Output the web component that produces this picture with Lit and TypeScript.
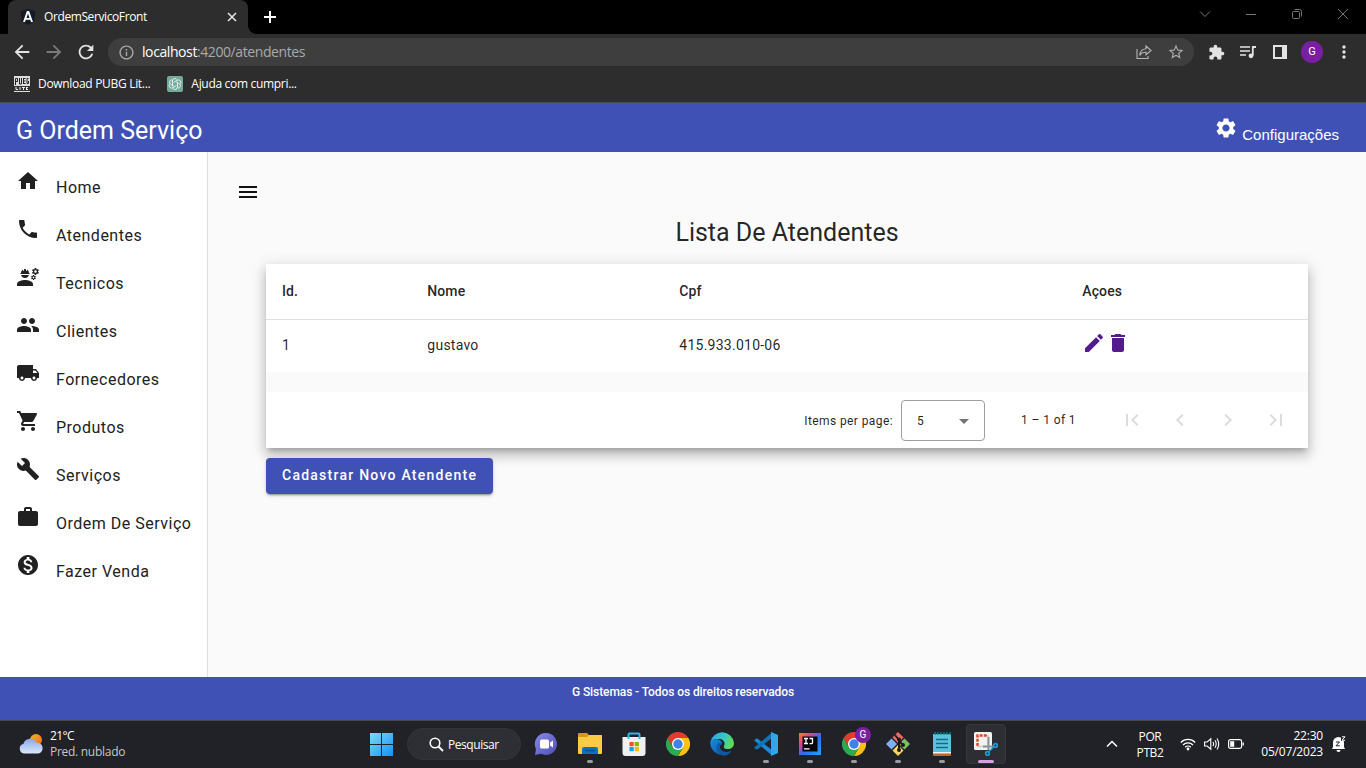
import { LitElement, html, css, svg, TemplateResult } from "lit";
import { customElement } from "lit/decorators.js";

const ICONS: Record<string, string> = {
  home: "M10 20v-6h4v6h5v-8h3L12 3 2 12h3v8z",
  phone: "M6.62 10.79c1.44 2.83 3.76 5.14 6.59 6.59l2.2-2.2c.27-.27.67-.36 1.02-.24 1.12.37 2.33.57 3.57.57.55 0 1 .45 1 1V20c0 .55-.45 1-1 1-9.39 0-17-7.61-17-17 0-.55.45-1 1-1h3.5c.55 0 1 .45 1 1 0 1.25.2 2.45.57 3.57.11.35.03.74-.25 1.02l-2.2 2.2z",
  engineering: "M9 15c-2.67 0-8 1.34-8 4v2h16v-2c0-2.66-5.33-4-8-4zM5.1 10c.45 1.7 2 3 3.9 3s3.45-1.3 3.9-3zM4.74 9h8.52c.27 0 .49-.22.49-.49v-.02c0-.27-.22-.49-.49-.49H13c0-1.48-.81-2.75-2-3.45v.95c0 .28-.22.5-.5.5s-.5-.22-.5-.5V4.14C9.68 4.06 9.35 4 9 4s-.68.06-1 .14V5.5c0 .28-.22.5-.5.5S7 5.78 7 5.5v-.95C5.81 5.25 5 6.52 5 8h-.26c-.27 0-.49.22-.49.49v.03c0 .26.22.48.49.48zM21.98 6.23l.93-.83-.75-1.3-1.19.39c-.14-.11-.3-.2-.47-.27L20.25 3h-1.5l-.25 1.22c-.17.07-.33.16-.48.27l-1.18-.39-.75 1.3.93.83c-.02.17-.02.35 0 .52l-.93.85.75 1.3 1.2-.38c.13.1.28.18.43.25l.28 1.23h1.5l.27-1.22c.16-.07.3-.15.44-.25l1.19.38.75-1.3-.93-.85c.03-.19.02-.36.01-.53zM19.5 7.75c-.69 0-1.25-.56-1.25-1.25s.56-1.25 1.25-1.25 1.25.56 1.25 1.25-.56 1.25-1.25 1.25zM19.4 10.79l-.85.28c-.1-.08-.21-.14-.33-.19l-.18-.88h-1.07l-.18.87c-.12.05-.24.12-.34.19l-.84-.28-.54.93.66.59c-.01.13-.01.25 0 .37l-.66.61.54.93.86-.27c.1.07.2.13.31.18l.18.88h1.07l.19-.87c.11-.05.22-.11.32-.18l.85.27.54-.93-.66-.61c.01-.13.01-.25 0-.37l.66-.59-.53-.93zm-1.9 2.6c-.49 0-.89-.4-.89-.89s.4-.89.89-.89.89.4.89.89-.4.89-.89.89z",
  group: "M16 11c1.66 0 2.99-1.34 2.99-3S17.66 5 16 5c-1.66 0-3 1.34-3 3s1.34 3 3 3zm-8 0c1.66 0 2.99-1.34 2.99-3S9.66 5 8 5C6.34 5 5 6.34 5 8s1.34 3 3 3zm0 2c-2.33 0-7 1.17-7 3.5V19h14v-2.5c0-2.33-4.67-3.5-7-3.5zm8 0c-.29 0-.62.02-.97.05 1.16.84 1.97 1.97 1.97 3.45V19h6v-2.5c0-2.33-4.67-3.5-7-3.5z",
  truck: "M20 8h-3V4H3c-1.1 0-2 .9-2 2v11h2c0 1.66 1.34 3 3 3s3-1.34 3-3h6c0 1.66 1.34 3 3 3s3-1.34 3-3h2v-5l-3-4zM6 18.5c-.83 0-1.5-.67-1.5-1.5s.67-1.5 1.5-1.5 1.5.67 1.5 1.5-.67 1.5-1.5 1.5zm13.5-9l1.96 2.5H17V9.5h2.5zm-1.5 9c-.83 0-1.5-.67-1.5-1.5s.67-1.5 1.5-1.5 1.5.67 1.5 1.5-.67 1.5-1.5 1.5z",
  cart: "M7 18c-1.1 0-1.99.9-1.99 2S5.9 22 7 22s2-.9 2-2-.9-2-2-2zM1 2v2h2l3.6 7.59-1.35 2.45c-.16.28-.25.61-.25.96 0 1.1.9 2 2 2h12v-2H7.42c-.14 0-.25-.11-.25-.25l.03-.12.9-1.63h7.45c.75 0 1.41-.41 1.75-1.03l3.58-6.49c.08-.14.12-.31.12-.48 0-.55-.45-1-1-1H5.21l-.94-2H1zm16 16c-1.1 0-1.99.9-1.99 2s.89 2 1.99 2 2-.9 2-2-.9-2-2-2z",
  build: "M22.7 19l-9.1-9.1c.9-2.3.4-5-1.5-6.9-2-2-5-2.4-7.4-1.3L9 6 6 9 1.6 4.7C.4 7.1.9 10.1 2.9 12.1c1.9 1.9 4.6 2.4 6.9 1.5l9.1 9.1c.4.4 1 .4 1.4 0l2.3-2.3c.5-.4.5-1.1.1-1.4z",
  work: "M20 6h-4V4c0-1.11-.89-2-2-2h-4c-1.11 0-2 .89-2 2v2H4c-1.11 0-1.99.89-1.99 2L2 19c0 1.11.89 2 2 2h16c1.11 0 2-.89 2-2V8c0-1.11-.89-2-2-2zm-6 0h-4V4h4v2z",
  money: "M12 2C6.48 2 2 6.48 2 12s4.48 10 10 10 10-4.48 10-10S17.52 2 12 2zm1.41 16.09V20h-2.67v-1.93c-1.71-.36-3.16-1.46-3.27-3.4h1.96c.1 1.05.82 1.87 2.65 1.87 1.96 0 2.4-.98 2.4-1.59 0-.83-.44-1.61-2.67-2.14-2.48-.6-4.18-1.62-4.18-3.67 0-1.72 1.39-2.84 3.11-3.21V4h2.67v1.95c1.86.45 2.79 1.86 2.85 3.39H14.3c-.05-1.11-.64-1.87-2.22-1.87-1.5 0-2.4.68-2.4 1.64 0 .84.65 1.39 2.67 1.91s4.18 1.39 4.18 3.91c-.01 1.83-1.38 2.83-3.12 3.16z",
  settings: "M19.14 12.94c.04-.3.06-.61.06-.94 0-.32-.02-.64-.07-.94l2.03-1.58c.18-.14.23-.41.12-.61l-1.92-3.32c-.12-.22-.37-.29-.59-.22l-2.39.96c-.5-.38-1.03-.7-1.62-.94l-.36-2.54c-.04-.24-.24-.41-.48-.41h-3.84c-.24 0-.43.17-.47.41l-.36 2.54c-.59.24-1.13.57-1.62.94l-2.39-.96c-.22-.08-.47 0-.59.22L2.74 8.87c-.12.21-.08.47.12.61l2.03 1.58c-.05.3-.09.63-.09.94s.02.64.07.94l-2.03 1.58c-.18.14-.23.41-.12.61l1.92 3.32c.12.22.37.29.59.22l2.39-.96c.5.38 1.03.7 1.62.94l.36 2.54c.05.24.24.41.48.41h3.84c.24 0 .44-.17.47-.41l.36-2.54c.59-.24 1.13-.56 1.62-.94l2.39.96c.22.08.47 0 .59-.22l1.92-3.32c.12-.22.07-.47-.12-.61l-2.01-1.58zM12 15.6c-1.98 0-3.6-1.62-3.6-3.6s1.62-3.6 3.6-3.6 3.6 1.62 3.6 3.6-1.62 3.6-3.6 3.6z",
  edit: "M3 17.25V21h3.75L17.81 9.94l-3.75-3.75L3 17.25zM20.71 7.04c.39-.39.39-1.02 0-1.41l-2.34-2.34c-.39-.39-1.02-.39-1.41 0l-1.83 1.83 3.75 3.75 1.83-1.83z",
  trash: "M6 19c0 1.1.9 2 2 2h8c1.1 0 2-.9 2-2V7H6v12zM19 4h-3.5l-1-1h-5l-1 1H5v2h14V4z",
  menu: "M3 18h18v-2H3v2zm0-5h18v-2H3v2zm0-7v2h18V6H3z",
  first: "M18.41 16.59L13.82 12l4.59-4.59L17 6l-6 6 6 6zM6 6h2v12H6z",
  prev: "M15.41 7.41L14 6l-6 6 6 6 1.41-1.41L10.83 12z",
  next: "M10 6L8.59 7.41 13.17 12l-4.58 4.59L10 18l6-6z",
  last: "M5.59 7.41L10.18 12l-4.59 4.59L7 18l6-6-6-6zM16 6h2v12h-2z",
  back: "M20 11H7.83l5.59-5.59L12 4l-8 8 8 8 1.41-1.41L7.83 13H20v-2z",
  forward: "M12 4l-1.41 1.41L16.17 11H4v2h12.17l-5.58 5.59L12 20l8-8z",
  reload: "M17.65 6.35C16.2 4.9 14.21 4 12 4c-4.42 0-7.99 3.58-7.99 8s3.57 8 7.99 8c3.73 0 6.84-2.55 7.73-6h-2.08c-.82 2.33-3.04 4-5.65 4-3.31 0-6-2.69-6-6s2.69-6 6-6c1.66 0 3.14.69 4.22 1.78L13 11h7V4l-2.35 2.35z",
  info: "M11 7h2v2h-2zm0 4h2v6h-2zm1-9C6.48 2 2 6.48 2 12s4.48 10 10 10 10-4.48 10-10S17.52 2 12 2zm0 18c-4.41 0-8-3.59-8-8s3.59-8 8-8 8 3.59 8 8-3.59 8-8 8z",
  star: "M22 9.24l-7.19-.62L12 2 9.19 8.63 2 9.24l5.46 4.73L5.82 21 12 17.27 18.18 21l-1.63-7.03L22 9.24zM12 15.4l-3.76 2.27 1-4.28-3.32-2.88 4.38-.38L12 6.1l1.71 4.04 4.38.38-3.32 2.88 1 4.28L12 15.4z",
  puzzle: "M20.5 11H19V7c0-1.1-.9-2-2-2h-4V3.500C13 2.120 11.880 1 10.500 1S8 2.120 8 3.500V5H4c-1.100 0-1.990.9-1.990 2v3.800H3.500c1.490 0 2.700 1.210 2.700 2.700s-1.210 2.700-2.700 2.700H2V20c0 1.100.9 2 2 2h3.800v-1.500c0-1.490 1.210-2.700 2.700-2.700 1.490 0 2.700 1.210 2.700 2.700V22H17c1.100 0 2-.9 2-2v-4h1.500c1.380 0 2.500-1.120 2.500-2.500S21.880 11 20.500 11z",
  more: "M12 8c1.1 0 2-.9 2-2s-.9-2-2-2-2 .9-2 2 .9 2 2 2zm0 2c-1.100 0-2 .9-2 2s.9 2 2 2 2-.9 2-2-.9-2-2-2zm0 6c-1.100 0-2 .9-2 2s.9 2 2 2 2-.9 2-2-.9-2-2-2z",
};

const icon = (name: string, size = 24) => html`<svg class="ic" width=${size} height=${size} viewBox="0 0 24 24" fill="currentColor"><path d=${ICONS[name]}></path></svg>`;

const art = (w: number, h: number, body: TemplateResult | unknown) =>
  html`<svg class="ic" width=${w} height=${h} viewBox="0 0 ${w} ${h}" fill="none">${body}</svg>`;

const chromeLogo = svg`
  <path d="M12 6H22.400A12 12 0 0 0 1.600 6L6.800 15Z" fill="#e33b2e"/>
  <path d="M12 6H22.400A12 12 0 0 1 12 24L17.200 15Z" fill="#fbc116"/>
  <path d="M6.800 15L1.600 6A12 12 0 0 0 12 24L17.200 15Z" fill="#2da94f"/>
  <circle cx="12" cy="12" r="6" fill="#fff"/><circle cx="12" cy="12" r="4.700" fill="#3f82ee"/>`;

@customElement("browser-chrome")
export class BrowserChrome extends LitElement {
  static styles = css`
    :host { display: block; background: #2d2d2d; color: #fff; font-family: "Open Sans", "Noto Sans", sans-serif; border-bottom: 1px solid #4b4b4b; height: 102px; box-sizing: content-box; }
    .ic { display: block; flex: none; }
    .tabs { height: 34px; background: #000; display: flex; align-items: stretch; }
    .tab { width: 240px; box-sizing: border-box; margin-left: 8px; background: #2d2d2d; border-radius: 8px 8px 0 0; display: flex; align-items: center; padding: 0 10px 0 12px; font-size: 12px; }
    .tab-title { flex: 1; margin-left: 8px; letter-spacing: -0.400px; padding-bottom: 1px; }
    .foot-r { width: 8px; height: 8px; align-self: flex-end; background: radial-gradient(circle at 8px 0, #000 7.500px, #2d2d2d 8px); }
    .plus { align-self: center; margin-left: 8px; }
    .win { margin-left: auto; display: flex; align-items: center; padding: 0 0 6px; color: #777; }
    .win span { width: 46px; display: flex; justify-content: center; }
    .bar { height: 36px; display: flex; align-items: center; padding: 0 6px; color: #e3e3e3; }
    .slot { width: 32px; display: flex; justify-content: center; flex: none; }
    .dim { color: #7b7b7b; }
    .omni { height: 28px; margin: 0 6px 0 6px; flex: 1; background: #3e3e3e; border-radius: 14px; display: flex; align-items: center; padding: 0 2px 0 9.500px; font-size: 14px; color: #a9a9a9; }
    .url { flex: 1; margin-left: 7.500px; letter-spacing: -0.410px; padding-bottom: 1px; }
    .url b { font-weight: 400; color: #fff; }
    .avatar { width: 22px; height: 22px; border-radius: 50%; background: #7b1fa2; color: #fff; font: 11px/22px Roboto, sans-serif; text-align: center; }
    .marks { height: 28px; display: flex; align-items: center; padding-left: 14px; font-size: 12px; }
    .marks span { margin: 0 17px 2px 8px; letter-spacing: -0.310px; }
  `;
  render() {
    return html`
      <div class="tabs">
        <div class="tab">
          ${art(16, 16, svg`<path d="M8 0l7.500 2.600-1.200 10L8 16 1.700 12.600.5 2.600z" fill="#141b28"/><path d="M6.900 2L3 13h2l.8-2.300h4.400l.8 2.300h2L9.100 2zM8 4.500l1.500 4.500h-3z" fill="#fff" fill-rule="evenodd"/>`)}
          <span class="tab-title">OrdemServicoFront</span>
          ${art(12, 12, svg`<path d="M2 2l8 8M10 2l-8 8" stroke="#e8e8e8" stroke-width="1.500"/>`)}
        </div>
        <div class="foot-r"></div>
        <div class="plus">${art(12, 12, svg`<path d="M6 0v12M0 6h12" stroke="#fff" stroke-width="2"/>`)}</div>
        <div class="win">
          <span>${art(12, 12, svg`<path d="M1 3.500l5 5 5-5" stroke="currentColor"/>`)}</span>
          <span>${art(10, 12, svg`<path d="M0 6.500h10" stroke="currentColor"/>`)}</span>
          <span>${art(12, 12, svg`<rect x="1.500" y="3.500" width="7" height="7" rx="1" stroke="currentColor"/><path d="M3.500 1.500h5a2 2 0 0 1 2 2v5" stroke="currentColor"/>`)}</span>
          <span>${art(12, 12, svg`<path d="M1 1l10 10M11 1L1 11" stroke="currentColor"/>`)}</span>
        </div>
      </div>
      <div class="bar">
        <span class="slot">${icon("back", 22)}</span>
        <span class="slot dim">${icon("forward", 22)}</span>
        <span class="slot">${icon("reload", 22)}</span>
        <div class="omni">
          ${icon("info", 17)}
          <span class="url"><b>localhost</b>:4200/atendentes</span>
          <span class="slot">${art(16, 16, svg`<path d="M1 5v9.500h11V12M10 2l5 4.500-5 4.200V8.200C7 8 5 9 3.800 11.500 4 7.500 6.500 5 10 4.700z" stroke="#b5b5b5" stroke-width="1.100"/>`)}</span>
          <span class="slot">${icon("star", 18)}</span>
        </div>
        <span class="slot">${icon("puzzle", 17)}</span>
        <span class="slot">${art(16, 14, svg`<path d="M0 2h10M0 6h10M0 10h6" stroke="currentColor" stroke-width="1.700"/><path d="M12.800 1v9.500M12 2h4" stroke="currentColor" stroke-width="1.800"/><circle cx="11" cy="10.800" r="2.400" fill="currentColor"/>`)}</span>
        <span class="slot">${art(14, 14, svg`<path fill-rule="evenodd" d="M0 0h14v14H0zM2 2v10h7V2z" fill="currentColor"/>`)}</span>
        <span class="slot"><span class="avatar">G</span></span>
        <span class="slot">${icon("more", 20)}</span>
      </div>
      <div class="marks">
        ${art(16, 16, svg`<rect width="16" height="16" fill="#ddd"/><path d="M1.500 9V2.500h2v3h-2M5.500 2v6h2V2M9.500 2v6M9.500 2.500h2M9.500 5h2M9.500 7.500h2M14.500 2.500h-1.500v5h1.500V5" stroke="#222" stroke-width="1"/><rect y="10" width="16" height="5" fill="#333"/><path d="M2 11v2.500h2M6 11v3M8 11.500h3M9.500 11.500v2.500M12 11.500h2M12 13.500h2M12.500 11v3" stroke="#eee"/>`)}
        <span>Download PUBG Lit...</span>
        ${art(16, 16, svg`<rect width="16" height="16" rx="2" fill="#74aa9c"/><g stroke="#fff" stroke-width=".8"><path d="M5.500 9.500V5a2.500 2.500 0 0 1 4.700-1.200M7 10.300L3.600 8.300a2.500 2.500 0 0 1 1.500-4.500M9.500 9.600l-3.700 2.100a2.500 2.500 0 0 1-3.300-3.600M10.500 6.500V11a2.500 2.500 0 0 1-4.700 1.200M9 5.700l3.400 2a2.500 2.500 0 0 1-1.500 4.500M6.500 6.400l3.700-2.100a2.500 2.500 0 0 1 3.300 3.600"/></g>`)}
        <span>Ajuda com cumpri...</span>
      </div>`;
  }
}

const NAV: [string, string][] = [
  ["home", "Home"], ["phone", "Atendentes"], ["engineering", "Tecnicos"], ["group", "Clientes"], ["truck", "Fornecedores"],
  ["cart", "Produtos"], ["build", "Serviços"], ["work", "Ordem De Serviço"], ["money", "Fazer Venda"],
];

@customElement("service-page")
export class ServicePage extends LitElement {
  static styles = css`
    :host { display: flex; flex-direction: column; flex: 1; min-height: 0; font-family: Roboto, sans-serif; color: rgba(0, 0, 0, 0.87); background: #fafafa; }
    .ic { display: block; flex: none; }
    header { height: 49px; box-sizing: border-box; background: #3f51b5; color: #fff; display: flex; align-items: center; justify-content: space-between; padding: 8px 27px 0 16px; }
    .brand { font-size: 25px; line-height: 32px; margin-bottom: 2px; }
    .config { display: flex; align-items: center; font: 15px/20px "Liberation Sans", Arial, sans-serif; gap: 4px; }
    .config .ic { margin-top: -7px; }
    .config span { margin-top: 6px; }
    .body { flex: 1; display: flex; min-height: 0; }
    nav { width: 207px; background: #fff; border-right: 1px solid #dedede; padding-top: 5px; flex: none; }
    .item { height: 48px; display: flex; align-items: center; padding-left: 16px; gap: 16px; font-size: 16px; letter-spacing: 0.500px; color: #212121; white-space: nowrap; }
    .item span { padding-top: 13px; }
    main { flex: 1; min-width: 0; padding: 28px 58px 0; }
    .burger { margin-left: -30px; color: #111; }
    h1 { margin: 13px 0 16px; font-weight: 400; font-size: 25px; line-height: 31px; text-align: center; }
    .card { box-shadow: 0 5px 5px -3px rgba(0, 0, 0, 0.200), 0 8px 10px 1px rgba(0, 0, 0, 0.140), 0 3px 14px 2px rgba(0, 0, 0, 0.120); background: #fafafa; }
    .row { display: grid; grid-template-columns: 145.300px 252px 403px 1fr; padding: 0 16px 2px; background: #fff; align-items: center; font-size: 14px; letter-spacing: 0.250px; height: 50px; }
    .head { height: 56px; box-sizing: border-box; border-bottom: 1px solid #e0e0e0; font-weight: 500; letter-spacing: 0.100px; padding-bottom: 1px; }
    .acts { display: flex; color: #551a8b; padding-bottom: 4px; }
    .pager { margin-top: 20px; height: 56px; background: #fff; display: flex; align-items: center; justify-content: flex-end; font-size: 12px; letter-spacing: 0.400px; padding-right: 8px; }
    .label { padding-top: 2px; }
    .select { width: 84px; height: 41px; box-sizing: border-box; border: 1px solid #9e9e9e; border-radius: 4px; display: flex; align-items: center; justify-content: space-between; padding: 2px 15px 0 15px; margin: 0 36px 0 8px; }
    .select .ic { color: #757575; }
    .range { margin-right: 32px; }
    .pg { width: 48px; display: flex; justify-content: center; color: #dcdcdc; }
    .btn { display: inline-flex; align-items: center; height: 36px; box-sizing: border-box; margin-top: 10px; padding: 0 16px 2px; border: 0; border-radius: 4px; background: #3f51b5; color: #fff; font: 500 14px Roboto, sans-serif; letter-spacing: 1.250px; box-shadow: 0 3px 1px -2px rgba(0, 0, 0, 0.200), 0 2px 2px 0 rgba(0, 0, 0, 0.140), 0 1px 5px 0 rgba(0, 0, 0, 0.120); white-space: nowrap; }
    footer { height: 43px; background: #3f51b5; color: #fff; text-align: center; font: 500 12px/30px Roboto, sans-serif; letter-spacing: -0.090px; }
  `;
  render() {
    return html`
      <header>
        <div class="brand">G Ordem Serviço</div>
        <div class="config">${icon("settings")}<span>Configurações</span></div>
      </header>
      <div class="body">
        <nav>${NAV.map(([i, t]) => html`<div class="item">${icon(i)}<span>${t}</span></div>`)}</nav>
        <main>
          <div class="burger">${icon("menu")}</div>
          <h1>Lista De Atendentes</h1>
          <div class="card">
            <div class="row head"><span>Id.</span><span>Nome</span><span>Cpf</span><span>Açoes</span></div>
            <div class="row"><span>1</span><span>gustavo</span><span>415.933.010-06</span><span class="acts">${icon("edit")}${icon("trash")}</span></div>
            <div class="pager">
              <span class="label">Items per page:</span>
              <div class="select"><span>5</span>${art(10, 5, svg`<path d="M0 0h10L5 5z" fill="currentColor"/>`)}</div>
              <span class="range">1 – 1 of 1</span>
              ${["first", "prev", "next", "last"].map((n) => html`<span class="pg">${icon(n)}</span>`)}
            </div>
          </div>
          <button class="btn">Cadastrar Novo Atendente</button>
        </main>
      </div>
      <footer>G Sistemas - Todos os direitos reservados</footer>`;
  }
}

const APPS: { body: unknown; run?: boolean; active?: boolean; badge?: boolean }[] = [
  { body: svg`<defs><linearGradient id="v" x1="0" y1="0" x2="1" y2="1"><stop stop-color="#8a8be8"/><stop offset="1" stop-color="#4f4db5"/></linearGradient></defs><path d="M12 1a11 11 0 1 1-5 20.800L1 23l1-6A11 11 0 0 1 12 1z" fill="url(#v)"/><rect x="6" y="7.500" width="9" height="9" rx="1.500" fill="#fff"/><path d="M16 10.500l3-2v7l-3-2z" fill="#fff"/>` },
  { run: true, body: svg`<path d="M0 2a1 1 0 0 1 1-1h8l2 2h13v6H0z" fill="#d69a14"/><path d="M0 5h9l2-2h12a1 1 0 0 1 1 1v17a1 1 0 0 1-1 1H1a1 1 0 0 1-1-1z" fill="#fccb46"/><path d="M4 22v-5a2 2 0 0 1 2-2h12a2 2 0 0 1 2 2v5z" fill="#0f6fc0"/><path d="M7 18.500h10" stroke="#0a4f92" stroke-width="1.500"/>` },
  { body: svg`<path d="M.5 5h23v16a3 3 0 0 1-3 3h-17a3 3 0 0 1-3-3z" fill="#f0f0f0"/><path d="M6.500 7V2.500A1 1 0 0 1 7.500 1.500h9a1 1 0 0 1 1 1V7" stroke="#35b5ea" stroke-width="2"/><path d="M7.500 10h4.200v4.200H7.500z" fill="#f25022"/><path d="M12.700 10h4.200v4.200h-4.200z" fill="#7fba00"/><path d="M7.500 15h4.200v4.200H7.500z" fill="#00a4ef"/><path d="M12.700 15h4.200v4.200h-4.200z" fill="#ffb900"/>` },
  { body: chromeLogo },
  { body: svg`<defs><linearGradient id="eg" x1="0" y1="0" x2="1" y2=".3"><stop stop-color="#2b9fe6"/><stop offset=".6" stop-color="#36c6c8"/><stop offset="1" stop-color="#5edb5a"/></linearGradient><linearGradient id="eb" x1="0" y1="0" x2="1" y2="1"><stop stop-color="#1b8be0"/><stop offset="1" stop-color="#0d4a94"/></linearGradient></defs><path d="M.3 10A12 12 0 0 1 24 11c0 4-2.800 6-6 6-3.500 0-5-1.500-4-3 2-3.500-1-7-5-7C5 7 1.500 8 .3 10z" fill="url(#eg)"/><path d="M.3 10C2 7.500 5.500 7 8 7.500c3 .5 4.500 3 4 4.500-2 1-3 3-1.500 5.500s6.500 4 11 1A12 12 0 0 1 .3 10z" fill="url(#eb)"/><path d="M7.500 12c-2 5 1 10.500 6.500 11.800 3-.4 5.700-2 7.500-5-5 2.500-9.500 1-11-1.500-1.300-2.400-.5-4.500 1.500-5.300-1-1.500-3.500-1.500-4.500 0z" fill="#0b5aa8"/>` },
  { run: true, body: svg`<path d="M0 8.200l3-2L18 18v5.500z" fill="#1a8ad4"/><path d="M0 15.800l3 2L18 6V.5z" fill="#0f73b8"/><path d="M17 0l7 3v18l-7 3z" fill="#2fa7f0"/>` },
  { run: true, body: svg`<defs><linearGradient id="ij" x1="0" y1="0" x2="1" y2="1"><stop stop-color="#fc801d"/><stop offset=".3" stop-color="#e0408a"/><stop offset=".55" stop-color="#2f6cf0"/><stop offset="1" stop-color="#21a3f5"/></linearGradient></defs><path d="M1 1h22v22H1z" fill="url(#ij)"/><path d="M4.500 4.500h15v15h-15z" fill="#08060b"/><path d="M6 6.500h4M8 6.500v5M6 11.500h4M11.500 6.500h3v4q0 1.200-1.200 1.200H11.500M6 16.800h5.500" stroke="#fff" stroke-width="1.300"/>` },
  { run: true, badge: true, body: chromeLogo },
  { run: true, body: svg`<path d="M12 0l5.500 5.500L12 11 6.500 5.500z" fill="#ef6b66"/><path d="M5.500 6.500L11 12l-5.500 5.500L0 12z" fill="#7fb0f2"/><path d="M18.500 6.500L24 12l-5.500 5.500L13 12z" fill="#7fbf62"/><path d="M12 13l5.500 5.500L12 24l-5.500-5.500z" fill="#f7d667"/><path d="M9 3l4 5v10M13 9l4 4" stroke="#1f1a1a" stroke-width="2"/><circle cx="13" cy="7.500" r="2" fill="#1f1a1a"/><circle cx="17" cy="13" r="2" fill="#1f1a1a"/><circle cx="13" cy="18" r="2" fill="#1f1a1a"/>` },
  { run: true, body: svg`<path d="M3 2h18v19H3z" fill="#58c5dc"/><path d="M3 20h18v3a1 1 0 0 1-1 1H4a1 1 0 0 1-1-1z" fill="#b86a32"/><path d="M3 20h18v1.500H3z" fill="#f2f2f2"/><path d="M6 7.500h12M6 11.500h12M6 15.500h12" stroke="#176b87" stroke-width="1.600"/><path d="M5 0v3M8 0v3M11 0v3M14 0v3M17 0v3M20 0v3" stroke="#1d7d99" stroke-width="1.300"/>` },
  { active: true, body: svg`<rect x="0" y="0" width="18" height="18" rx="1.500" fill="#f2f2f2"/><path d="M3.500 14V3.500H14" stroke="#d8472b" stroke-width="2.500" stroke-dasharray="3 1.200"/><path d="M14 3v12M3 14.500h12" stroke="#c9c9c9" stroke-width="1.500"/><path d="M14.500 5v13M9 14.500h10" stroke="#8b9299" stroke-width="2"/><circle cx="21.500" cy="13.500" r="1.800" stroke="#1f9ad6" stroke-width="1.800"/><circle cx="13.500" cy="21.500" r="1.800" stroke="#1f9ad6" stroke-width="1.800"/><path d="M15 19.500l4.500-4.500" stroke="#1f9ad6" stroke-width="1.500"/>` },
];

@customElement("task-bar")
export class TaskBar extends LitElement {
  static styles = css`
    :host { display: flex; height: 48px; box-sizing: border-box; border-top: 1px solid #47474a; background: #202227; color: #fff; font: 12px/16px "Open Sans", "Noto Sans", sans-serif; align-items: center; }
    .ic { display: block; flex: none; }
    .weather { width: 360px; box-sizing: border-box; padding: 0 0 2px 19px; display: flex; align-items: center; gap: 7px; letter-spacing: -0.650px; }
    .weather em { font-style: normal; display: block; color: #c6c6c8; letter-spacing: -0.280px; }
    .slot { width: 44px; height: 47px; box-sizing: border-box; padding-bottom: 2px; display: flex; justify-content: center; align-items: center; position: relative; flex: none; }
    .pill { width: 114px; height: 32px; box-sizing: border-box; border-radius: 16px; background: #2d2f34; border: 1px solid #34363b; margin: 0 3px 1px; display: flex; align-items: center; padding-left: 21px; gap: 4px; letter-spacing: -0.450px; }
    .pill span { padding-top: 1px; }
    .active::before { content: ""; position: absolute; inset: 3px 2px 4px; border-radius: 4px; background: #2c2e33; border: 1px solid #36383d; }
    .active .ic { position: relative; }
    .run::after, .active::after { content: ""; position: absolute; bottom: 5px; left: 19px; width: 6px; height: 3px; border-radius: 2px; background: #9b9b9e; }
    .active::after { left: 14px; width: 16px; background: #d89fe3; }
    .badge { position: absolute; left: 23px; top: 6px; width: 16px; height: 16px; border-radius: 50%; background: #7b1fa2; font: 10px/16px Roboto, sans-serif; text-align: center; }
    .tray { margin-left: auto; display: flex; align-items: center; padding: 0 20px 1px 0; }
    .lang { width: 40px; text-align: center; margin: 0 6px 0 12px; letter-spacing: -0.400px; padding-top: 2px; }
    .st { width: 24px; display: flex; justify-content: center; }
    .clock { text-align: right; width: 75px; margin-right: 8px; letter-spacing: -0.200px; white-space: nowrap; }
  `;
  render() {
    return html`
      <div class="weather">
        ${art(24, 22, svg`<defs><linearGradient id="s" x1="0" y1="0" x2="1" y2="1"><stop stop-color="#f9b22f"/><stop offset="1" stop-color="#ee6a1a"/></linearGradient><linearGradient id="c" x1="0" y1="0" x2="0" y2="1"><stop stop-color="#89a9e8"/><stop offset="1" stop-color="#dbe8fb"/></linearGradient></defs><circle cx="17" cy="7" r="6" fill="url(#s)"/><path d="M5 20.500a5 5 0 0 1-.5-9.800A7 7 0 0 1 17.500 9.800a5.400 5.400 0 0 1 1.500 10.700z" fill="url(#c)"/>`)}
        <div>21°C<em>Pred. nublado</em></div>
      </div>
      <div class="slot">${art(24, 24, svg`<defs><linearGradient id="w" x1="0" y1="0" x2="24" y2="24" gradientUnits="userSpaceOnUse"><stop stop-color="#7fdcfb"/><stop offset="1" stop-color="#1290f0"/></linearGradient></defs><path d="M0 1h11v11H0zM12 1h11v11H12zM0 13h11v11H0zM12 13h11v11H12z" fill="url(#w)"/>`)}</div>
      <div class="pill">${art(15, 15, svg`<circle cx="6" cy="6" r="4.800" stroke="#fff" stroke-width="1.600"/><path d="M9.500 9.500l4.500 4.500" stroke="#fff" stroke-width="1.800"/>`)}<span>Pesquisar</span></div>
      ${APPS.map((a) => html`<div class="slot ${a.run ? "run" : ""} ${a.active ? "active" : ""}">${art(24, 24, a.body)}${a.badge ? html`<span class="badge">G</span>` : ""}</div>`)}
      <div class="tray">
        ${art(12, 8, svg`<path d="M1 6.500l5-5 5 5" stroke="#fff" stroke-width="1.500"/>`)}
        <div class="lang">POR<br />PTB2</div>
        <span class="st">${art(16, 14, svg`<path d="M.8 5.500a10 10 0 0 1 14.400 0M3 8a7 7 0 0 1 10 0M5.200 10.200a4 4 0 0 1 5.600 0" stroke="#fff" stroke-width="1.200"/><circle cx="8" cy="12" r="1.400" fill="#fff"/>`)}</span>
        <span class="st">${art(16, 14, svg`<path d="M.6 5v4h2.600l3.600 3.200V1.800L3.200 5z" stroke="#fff" stroke-width="1.100"/><path d="M9 5q1.200 2 0 4M11 3.200q2.400 3.800 0 7.600M13 1.500q3.500 5.500 0 11" stroke="#fff" stroke-width="1.100"/>`)}</span>
        <span class="st">${art(16, 10, svg`<rect x=".6" y=".6" width="13" height="8.800" rx="1.800" stroke="#fff" stroke-width="1.200"/><rect x="2.200" y="2.200" width="4" height="5.600" fill="#fff"/><path d="M15.200 3.500v3" stroke="#fff" stroke-width="1.300"/>`)}</span>
        <div class="clock">22:30<br />05/07/2023</div>
        ${art(15, 16, svg`<path d="M2 11V6.500a5.500 5.500 0 0 1 11 0V11l1 2H1z" fill="#fff"/><path d="M5.500 14h4a2 2 0 0 1-4 0z" fill="#fff"/><path d="M10 0H15v5H10z" fill="#202227"/><path d="M11 .8h3l-3 3.500h3" stroke="#fff"/><path d="M5 6h3.500L5 9.800h3.800" stroke="#202227" stroke-width="1"/>`)}
      </div>`;
  }
}

@customElement("app-root")
export class AppRoot extends LitElement {
  static styles = css`
    :host { display: flex; flex-direction: column; width: 1366px; height: 768px; overflow: hidden; }
  `;
  render() {
    return html`<browser-chrome></browser-chrome><service-page></service-page><task-bar></task-bar>`;
  }
}
